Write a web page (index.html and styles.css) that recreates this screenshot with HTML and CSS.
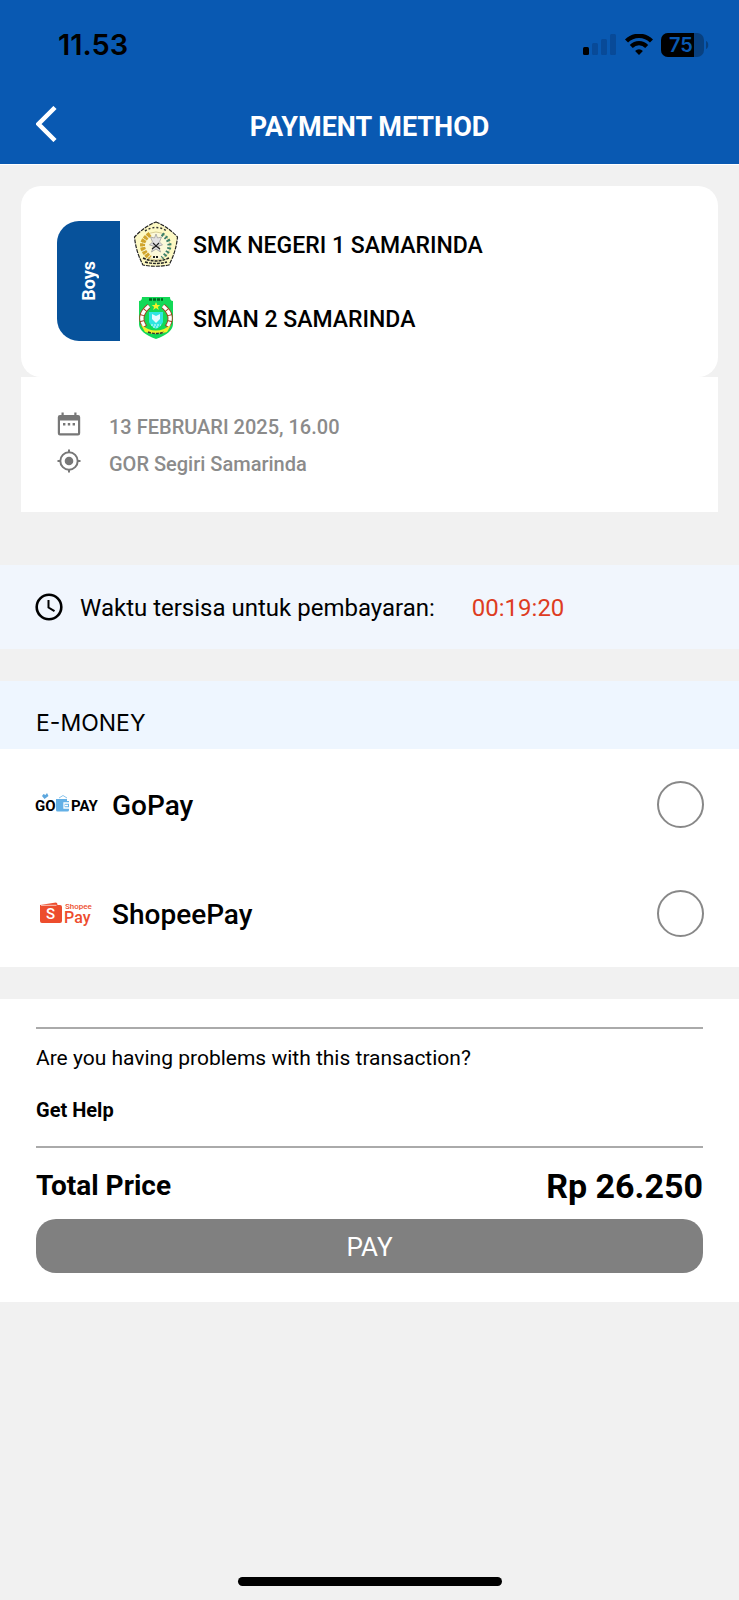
FILE: index.html
```html
<!DOCTYPE html>
<html lang="id">
<head>
    <meta charset="UTF-8">
    <meta name="viewport" content="width=device-width, initial-scale=1.0">
    <title>Payment Method</title>
    <link rel="stylesheet" href="styles.css">
</head>
<body>
    <header class="header">
        <div class="status-bar">
            <span class="clock">11.53</span>
            <div class="status-icons">
                <svg width="34" height="22" viewBox="0 0 34 22">
                    <rect x="0" y="13" width="6" height="8" rx="1.5"/>
                    <g fill="#084a98">
                        <rect x="9" y="9" width="6" height="12" rx="1.5"/>
                        <rect x="18" y="5" width="6" height="16" rx="1.5"/>
                        <rect x="27" y="0" width="6" height="21" rx="1.5"/>
                    </g>
                </svg>
                <svg width="28" height="22" viewBox="0 0 28 22" fill="none" stroke="#000">
                    <path d="M1.500 7a17.700 17.700 0 0 1 25 0" stroke-width="4.400"/>
                    <path d="M6.300 12.400a10.900 10.900 0 0 1 15.400 0" stroke-width="4.200"/>
                    <path d="M14 21l-3.900-4.100a5.600 5.600 0 0 1 7.800 0z" fill="#000" stroke="none"/>
                </svg>
                <svg width="48" height="24" viewBox="0 0 48 24">
                    <rect width="43" height="24" rx="7" fill="#08407f"/>
                    <path d="M7 0h26v24H7a7 7 0 0 1-7-7V7a7 7 0 0 1 7-7z"/>
                    <path d="M45 8c3 1 3 7 0 8z" fill="#08407f"/>
                    <text x="8" y="19" class="battery-level">75</text>
                </svg>
            </div>
        </div>
        <div class="title-bar">
            <button class="back" aria-label="Back">
                <svg width="22" height="36" viewBox="0 0 22 36" fill="none" stroke="#fff" stroke-width="4.500">
                    <path d="M19 1.500L2.500 18 19 34.500"/>
                </svg>
            </button>
            <h1>PAYMENT METHOD</h1>
        </div>
    </header>

    <main>
        <section class="match">
            <div class="match-card">
                <div class="category"><span>Boys</span></div>
                <div class="teams">
                    <div class="team">
                        <svg width="46" height="46" viewBox="0 0 46 46">
                            <path d="M23 1Q34 5 44.500 16Q43 31 36 44Q23 46.500 10 44Q3 31 1.500 16Q12 5 23 1z" fill="#fdf9c4" stroke="#222" stroke-width="1.200" stroke-dasharray="4 1"/>
                            <path d="M12 10Q23 3 34 10" fill="none" stroke="#333" stroke-width="1.500" stroke-dasharray="2 2"/>
                            <circle cx="23" cy="25" r="14" fill="#fbf8d9" stroke="#d8ce94" stroke-width="1"/>
                            <path d="M17 13Q2 24 17 37" fill="none" stroke="#d1a52d" stroke-width="5" stroke-dasharray="3 1"/>
                            <path d="M29 13Q44 24 29 37" fill="none" stroke="#3d8069" stroke-width="4" stroke-dasharray="2 2"/>
                            <path d="M23 13l1.500 4 4-1-2 5 3 3-4 1 2 6-4.500-3-4.500 3 2-6-4-1 3-3-2-5 4 1z" fill="#e2e1e2" stroke="#888" stroke-width=".6"/>
                            <path d="M20 22l3 3 3-3M19 28l4-3 4 3" stroke="#222" stroke-width="1.200" fill="none"/>
                            <path d="M10 37q13 6 26 0M12 41q11 3 22 0" fill="none" stroke="#222" stroke-width="1.400" stroke-dasharray="3 1"/>
                            <path d="M20 36h6" stroke="#222" stroke-width="2" stroke-dasharray="2 1"/>
                        </svg>
                        <span>SMK NEGERI 1 SAMARINDA</span>
                    </div>
                    <div class="team">
                        <svg width="46" height="46" viewBox="0 0 46 46">
                            <path d="M9 2h28q0 4 3 4v23q0 9-17 15Q6 38 6 29V6q3 0 3-4z" fill="#13d957"/>
                            <path d="M16 4.500h14" stroke="#062" stroke-width="2.500" stroke-dasharray="3 1"/>
                            <path d="M23 7l1.200 3h3l-2.300 2 1 3-2.900-2-2.900 2 1-3-2.300-2h3z" fill="#f4f12a"/>
                            <path d="M16 11Q4 21 12 32M30 11Q42 21 34 32" fill="none" stroke="#a0421e" stroke-width="5"/>
                            <path d="M16 11Q4 21 12 32M30 11Q42 21 34 32" fill="none" stroke="#fff" stroke-width="3.400" stroke-dasharray="5 1"/>
                            <path d="M16 17h14v10q-2 5-7 7-5-2-7-7z" fill="#2fe5e1"/>
                            <path d="M19 19l4 2 4-2v5l-4 4-4-4z" fill="#e5fbff"/>
                            <path d="M18 30h10M20 32h6" stroke="#dff" stroke-dasharray="2 1"/>
                            <path d="M8 30l7 4q8 3 16 0l7-4-4 7q-11 4-22 0z" fill="#eff22b"/>
                            <path d="M15 37q8 3 16 0" fill="none" stroke="#333" stroke-width="1.500" stroke-dasharray="3 1"/>
                        </svg>
                        <span>SMAN 2 SAMARINDA</span>
                    </div>
                </div>
            </div>
            <div class="match-info">
                <div class="info-row">
                    <svg width="24" height="24" viewBox="0 0 24 24">
                        <path d="M4.500 0.500h2.200v2.500h10.600V.5h2.200V3H21a2.200 2.200 0 0 1 2.200 2.200v16A2.200 2.200 0 0 1 21 23.400H3a2.200 2.200 0 0 1-2.200-2.200v-16A2.200 2.200 0 0 1 3 3h1.500zM3 8.500v12.700h18V8.500z" fill-rule="evenodd"/>
                        <path d="M6 11h2.400v2.400H6zM10.800 11h2.400v2.400h-2.400zM15.600 11H18v2.400h-2.400z"/>
                    </svg>
                    <span>13 FEBRUARI 2025, 16.00</span>
                </div>
                <div class="info-row">
                    <svg width="24" height="24" viewBox="0 0 24 24">
                        <circle cx="12" cy="12" r="4.300"/>
                        <circle cx="12" cy="12" r="8.700" fill="none" stroke="#777" stroke-width="2"/>
                        <path d="M12 .5v3M12 20.500v3M.5 12h3M20.500 12h3" stroke="#777" stroke-width="2"/>
                    </svg>
                    <span>GOR Segiri Samarinda</span>
                </div>
            </div>
        </section>

        <section class="countdown">
            <svg width="28" height="28" viewBox="0 0 28 28" fill="none" stroke="#000">
                <circle cx="14" cy="14" r="12.300" stroke-width="2.600"/>
                <path d="M13.500 7v7.500l6 3.700" stroke-width="2"/>
            </svg>
            <span>Waktu tersisa untuk pembayaran:</span>
            <span class="time-left">00:19:20</span>
        </section>

        <section class="methods">
            <h2>E-MONEY</h2>
            <label class="method">
                <svg class="brand" width="64" height="32" viewBox="0 0 64 32">
                    <text x="0" y="22" class="gopay-text">GO</text>
                    <path d="M7 7l1.500-2 2 1L12 4l1.500 3-4 3z" fill="#5da7de"/>
                    <path d="M21 10h11v2h2v9q0 1.500-1.500 1.500h-10Q21 22.500 21 21z" fill="#63b0e6"/>
                    <path d="M24 9l4-2.500L32 9" fill="none" stroke="#8cc6ee"/>
                    <path d="M34 14h-5v5h5M30 16.500h3" fill="none" stroke="#fff" stroke-width="1.300"/>
                    <text x="36" y="22" class="gopay-text">PAY</text>
                </svg>
                <span>GoPay</span>
                <input type="radio" name="method" value="gopay">
            </label>
            <label class="method">
                <svg class="brand" width="64" height="32" viewBox="0 0 64 32">
                    <path d="M5 7l16-2.500q1.500 0 1.500 2.500H25q2 0 2 2v14q0 2-2 2H7q-2 0-2-2z" fill="#ed4d2d"/>
                    <path d="M6 7.300h15.500" stroke="#fff" stroke-width=".7"/>
                    <text x="11" y="21" class="shopee-mark">S</text>
                    <text x="30" y="11" class="shopee-small">Shopee</text>
                    <text x="29" y="25" class="shopee-pay">Pay</text>
                </svg>
                <span>ShopeePay</span>
                <input type="radio" name="method" value="shopeepay">
            </label>
        </section>

        <section class="summary">
            <div class="help">
                <p>Are you having problems with this transaction?</p>
                <a href="#">Get Help</a>
            </div>
            <div class="total">
                <span>Total Price</span>
                <span class="price">Rp 26.250</span>
            </div>
            <button class="pay">PAY</button>
        </section>
    </main>

    <div class="home-indicator"></div>
</body>
</html>
```
FILE: styles.css
```css
* {
    box-sizing: border-box;
}

body {
    display: flex;
    flex-direction: column;
    min-height: 100vh;
    margin: 0;
    background-color: #f1f1f1;
    color: #000;
    font-family: Roboto, "Liberation Sans", sans-serif;
    font-size: 24px;
}

svg {
    display: block;
    flex-shrink: 0;
}

h1, h2, p {
    margin: 0;
}

/* Header */
.header {
    background-color: #0959b2;
    border-bottom: 1px solid #fff;
}

.status-bar {
    display: flex;
    justify-content: space-between;
    align-items: center;
    height: 89px;
    padding: 0 30px 0 58px;
}

.clock {
    font-family: Inter, sans-serif;
    font-size: 29px;
    font-weight: 600;
}

.status-icons {
    display: flex;
    align-items: center;
    gap: 8px;
}

.battery-level {
    font-family: Inter, sans-serif;
    font-size: 20px;
    font-weight: 600;
    fill: #0959b2;
}

.title-bar {
    display: grid;
    grid-template-columns: 60px 1fr 60px;
    align-items: center;
    height: 75px;
    padding: 0 36px;
}

.title-bar h1 {
    color: #fff;
    font-size: 27px;
    font-weight: 700;
    text-align: center;
}

.back {
    padding: 0 0 6px;
    border: none;
    background: none;
    cursor: pointer;
}

/* Match */
.match {
    padding: 21px 21px 53px;
}

.match-card {
    display: flex;
    gap: 13px;
    padding: 35px 36px 36px;
    border-radius: 20px;
    background-color: #fff;
}

.category {
    display: flex;
    justify-content: center;
    align-items: center;
    width: 63px;
    height: 120px;
    border-radius: 22px 0 0 22px;
    background-color: #07529b;
    color: #fff;
    font-size: 18px;
    font-weight: 700;
}

.category span {
    writing-mode: vertical-rl;
    transform: rotate(180deg);
}

.teams {
    display: flex;
    flex-direction: column;
    justify-content: space-between;
}

.team {
    display: flex;
    align-items: center;
    gap: 14px;
    font-size: 23px;
    font-weight: 500;
}

.team span {
    padding-top: 3px;
}

.match-info {
    padding: 30px 36px 31px;
    background-color: #fff;
    color: #8b8b8b;
    font-size: 20px;
    font-weight: 500;
}

.info-row {
    display: flex;
    gap: 28px;
    padding-top: 5px;
    line-height: 30px;
    height: 37px;
    fill: #777;
}

/* Countdown */
.countdown {
    display: flex;
    align-items: center;
    gap: 17px;
    height: 84px;
    padding: 0 35px;
    background-color: #f1f6fd;
    line-height: 30px;
}

.countdown span {
    padding-top: 2px;
}

.countdown .time-left {
    margin-left: 20px;
    color: #de3c22;
}

/* Payment methods */
.methods {
    margin: 32px 0;
    background-color: #fff;
}

.methods h2 {
    padding: 26px 36px 10px;
    background-color: #eef6ff;
    font-family: Inter, sans-serif;
    font-size: 23px;
    font-weight: 400;
    line-height: 32px;
}

.method {
    display: flex;
    align-items: center;
    gap: 13px;
    height: 109px;
    padding: 2px 35px 0;
    font-size: 28px;
    font-weight: 500;
    cursor: pointer;
}

.method span {
    padding-top: 2px;
}

.method input {
    appearance: none;
    width: 47px;
    height: 47px;
    margin: 0 0 0 auto;
    border: 2px solid #888;
    border-radius: 50%;
}

.method input:checked {
    border: 12px solid #0959b2;
}

.gopay-text {
    font-size: 15px;
    font-weight: 700;
}

.shopee-mark {
    fill: #fff;
    font-size: 15px;
}

.shopee-small {
    fill: #ed4d2d;
    font-size: 8px;
}

.shopee-pay {
    fill: #ed4d2d;
    font-size: 16px;
    font-weight: 500;
}

/* Summary */
.summary {
    padding: 28px 36px 29px;
    background-color: #fff;
}

.help {
    display: flex;
    flex-direction: column;
    align-items: flex-start;
    gap: 24px;
    padding: 15px 0 22px;
    border-top: 2px solid #aaa;
    border-bottom: 2px solid #aaa;
    font-size: 21px;
    line-height: 28px;
}

.help a {
    color: #000;
    font-size: 20px;
    font-weight: 700;
    text-decoration: none;
}

.total {
    display: flex;
    justify-content: space-between;
    align-items: center;
    height: 71px;
    padding-top: 4px;
    font-size: 28px;
    font-weight: 700;
}

.price {
    font-size: 34px;
}

.pay {
    display: block;
    width: 100%;
    height: 54px;
    padding-top: 3px;
    border: none;
    border-radius: 20px;
    background-color: #808080;
    color: #fff;
    font-family: inherit;
    font-size: 26px;
    cursor: pointer;
}

.home-indicator {
    width: 264px;
    height: 9px;
    margin: auto auto 14px;
    border-radius: 5px;
    background-color: #000;
}
```
